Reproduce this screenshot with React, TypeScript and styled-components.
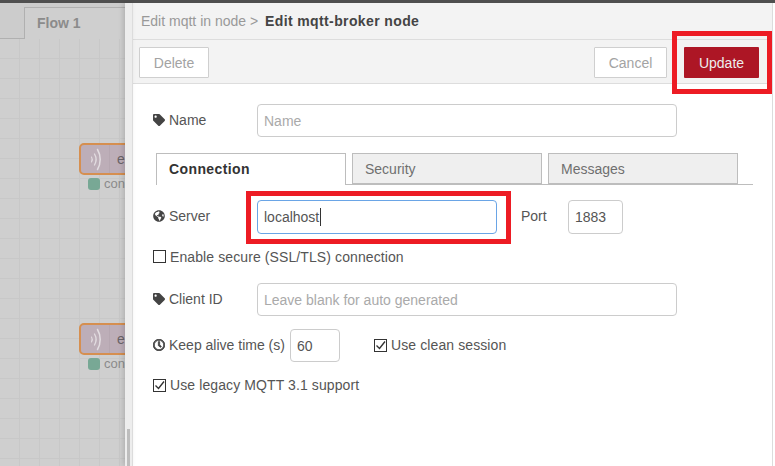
import React from "react";
import styled, { createGlobalStyle } from "styled-components";
import { FaTag, FaGlobeAmericas, FaRegClock } from "react-icons/fa";

const GlobalStyle = createGlobalStyle`
  html, body {
    margin: 0;
    padding: 0;
    height: 100%;
    overflow: hidden;
    background: #fff;
  }
  * {
    box-sizing: border-box;
  }
`;

const Page = styled.div`
  width: 775px;
  height: 466px;
  display: flex;
  flex-direction: column;
  font-family: "Liberation Sans", Arial, sans-serif;
  font-size: 14px;
  color: #555;
  overflow: hidden;
`;

const TopBar = styled.div`
  height: 3px;
  background: #4f4f4f;
  flex: none;
`;

const Main = styled.div`
  flex: 1;
  display: flex;
  min-height: 0;
`;

const Workspace = styled.div`
  position: relative;
  width: 125px;
  flex: none;
  display: flex;
  flex-direction: column;
  overflow: hidden;
  background: #cfcfcf;
`;

const FlowTabs = styled.div`
  height: 36px;
  flex: none;
  padding: 4px 0 0 24px;
  background: #cccccc;
  border-bottom: 1px solid #b0b0b0;
  display: flex;
`;

const FlowTab = styled.div`
  flex: 1;
  height: 32px;
  padding: 7px 0 0 12px;
  background: #cfcfcf;
  border-top: 1px solid #b0b0b0;
  border-left: 1px solid #b0b0b0;
  font-weight: bold;
  color: #8b8b8b;
`;

const Grid = styled.div`
  flex: 1;
  background-color: #cfcfcf;
  background-image:
    linear-gradient(to right, #c8c8c8 1px, transparent 1px),
    linear-gradient(to bottom, #c8c8c8 1px, transparent 1px);
  background-size: 20px 20px;
  background-position: 19px 19px;
`;

const Node = styled.div<{ $top: number }>`
  position: absolute;
  left: 79px;
  top: ${(p) => p.$top}px;
  width: 70px;
  height: 32px;
  display: flex;
  background: #bdaeb8;
  border: 2px solid #d68f50;
  border-radius: 5px;
`;

const NodeIcon = styled.div`
  width: 29px;
  flex: none;
  display: flex;
  align-items: center;
  justify-content: center;
  border-right: 1px solid #b6a7b1;
`;

const NodeLabel = styled.span`
  padding-left: 7px;
  line-height: 28px;
  color: #6a6367;
`;

const NodeStatus = styled.div<{ $top: number }>`
  position: absolute;
  left: 88px;
  top: ${(p) => p.$top}px;
  display: flex;
  align-items: center;
  gap: 4px;
  font-size: 13px;
  color: #8b8b8b;
`;

const StatusDot = styled.span`
  width: 12px;
  height: 12px;
  border-radius: 3px;
  background: #78a895;
`;

const Sash = styled.div`
  position: relative;
  width: 8px;
  flex: none;
  background: #ededed;
  border-right: 1px solid #dcdcdc;
  box-shadow: -2px 0 5px rgba(0, 0, 0, 0.14);
`;

const SashGrip = styled.div`
  position: absolute;
  left: 2px;
  bottom: 0;
  width: 3px;
  height: 37px;
  background: #bdbdbd;
`;

const Panel = styled.div`
  width: 640px;
  flex: none;
  display: flex;
  flex-direction: column;
  background: #fff;
  border-right: 1px solid #dcdcdc;
`;

const Breadcrumb = styled.div`
  height: 37px;
  flex: none;
  padding: 10px 0 0 8px;
  background: #f3f3f3;
  border-bottom: 1px solid #dddddd;
  color: #999;
`;

const Current = styled.b`
  margin-left: 3px;
  letter-spacing: 0.38px;
  color: #444;
`;

const Tray = styled.div`
  height: 44px;
  flex: none;
  display: flex;
  align-items: flex-start;
  padding: 7px 13px 0 6px;
  gap: 17px;
  background: #f3f3f3;
  border-bottom: 1px solid #dddddd;
`;

const Spacer = styled.div`
  flex: 1;
`;

const TrayButton = styled.button<{ $width: number; $primary?: boolean }>`
  width: ${(p) => p.$width}px;
  height: 31px;
  padding: 0;
  font: inherit;
  border-radius: 1px;
  border: ${(p) => (p.$primary ? "none" : "1px solid #cfcfcf")};
  background: ${(p) => (p.$primary ? "#ad1625" : "#fff")};
  color: ${(p) => (p.$primary ? "#eeeeee" : "#a3a3a3")};
`;

const Form = styled.div`
  flex: 1;
  display: flex;
  flex-direction: column;
  padding: 20px 0 0 20px;
`;

const Row = styled.div<{ $height: number; $top?: number }>`
  display: flex;
  align-items: center;
  height: ${(p) => p.$height}px;
  margin-top: ${(p) => p.$top ?? 0}px;
  flex: none;
`;

const Label = styled.label<{ $width?: number; $gap?: number }>`
  display: flex;
  align-items: center;
  gap: 4px;
  width: ${(p) => (p.$width ? `${p.$width}px` : "auto")};
  margin-left: ${(p) => p.$gap ?? 0}px;
  padding-bottom: 2px;
  flex: none;
  color: #555;
  svg {
    color: #444;
    font-size: 12px;
  }
`;

const BoldClock = styled(FaRegClock)`
  stroke: currentColor;
  stroke-width: 35px;
`;

const Field = styled.div<{ $width: number }>`
  position: relative;
  width: ${(p) => p.$width}px;
  height: 100%;
  flex: none;
`;

const Input = styled.input<{ $focus?: boolean }>`
  width: 100%;
  height: 100%;
  padding: 0 6px;
  font: inherit;
  color: #555;
  outline: none;
  background: #fff;
  border-radius: 4px;
  border: 1px solid ${(p) => (p.$focus ? "#6aa5e6" : "#cccccc")};
  &::placeholder {
    color: #aaaaaa;
    opacity: 1;
  }
`;

const Caret = styled.span`
  position: absolute;
  left: 63px;
  top: 8px;
  width: 1px;
  height: 18px;
  background: #333;
`;

const Tabs = styled.div`
  display: flex;
  gap: 6px;
  width: 597px;
  height: 32px;
  margin: 16px 0 15px 3px;
  padding-right: 15px;
  border-bottom: 1px solid #bdbdbd;
  flex: none;
`;

const Tab = styled.div<{ $active?: boolean }>`
  width: 190px;
  height: ${(p) => (p.$active ? 32 : 31)}px;
  padding: 7px 0 0 12px;
  background: ${(p) => (p.$active ? "#fff" : "#efefef")};
  border: 1px solid #bdbdbd;
  border-bottom: ${(p) => (p.$active ? "none" : "1px solid #bdbdbd")};
  color: ${(p) => (p.$active ? "#333" : "#6f6f6f")};
  font-weight: ${(p) => (p.$active ? "bold" : "normal")};
  letter-spacing: ${(p) => (p.$active ? "0.4px" : "0")};
`;

const CheckRow = styled.label<{ $offset?: number; $lift?: number }>`
  display: flex;
  align-items: center;
  gap: 4px;
  margin-left: ${(p) => p.$offset ?? 0}px;
  margin-bottom: ${(p) => p.$lift ?? 0}px;
  flex: none;
  letter-spacing: 0.1px;
  color: #555;
`;

const Box = styled.span`
  width: 13px;
  height: 13px;
  border: 1px solid #333;
  background: #fff;
  flex: none;
  display: flex;
  align-items: center;
  justify-content: center;
`;

const Highlight = styled.div<{ $x: number; $y: number; $w: number; $h: number }>`
  position: absolute;
  left: ${(p) => p.$x}px;
  top: ${(p) => p.$y}px;
  width: ${(p) => p.$w}px;
  height: ${(p) => p.$h}px;
  border: 5px solid #ed1c24;
  pointer-events: none;
`;

const Waves = () => (
  <svg width="11" height="23" viewBox="0 0 11 23" fill="none" stroke="#e3dde1" strokeLinecap="round">
    <path d="M1.5 9c1 1.6 1 3.4 0 5" strokeWidth="1.1" />
    <path d="M4.5 6c2 3.4 2 7.6 0 11" strokeWidth="1.3" />
    <path d="M7.5 1.5c3.6 6 3.6 14 0 20" strokeWidth="1.5" />
  </svg>
);

const Tick = ({ checked }: { checked?: boolean }) => (
  <Box>
    {checked && (
      <svg width="11" height="11" viewBox="0 0 11 11" fill="none" stroke="#333" strokeWidth="1.4">
        <path d="M1.5 5.5l3 3 5.5-7" />
      </svg>
    )}
  </Box>
);

const App = () => {
  return (
    <Page>
      <GlobalStyle />
      <TopBar />
      <Main>
        <Workspace>
          <FlowTabs>
            <FlowTab>Flow 1</FlowTab>
          </FlowTabs>
          <Grid />
          <Node $top={140}>
            <NodeIcon>
              <Waves />
            </NodeIcon>
            <NodeLabel>e</NodeLabel>
          </Node>
          <NodeStatus $top={173}>
            <StatusDot />
            con
          </NodeStatus>
          <Node $top={320}>
            <NodeIcon>
              <Waves />
            </NodeIcon>
            <NodeLabel>e</NodeLabel>
          </Node>
          <NodeStatus $top={353}>
            <StatusDot />
            con
          </NodeStatus>
        </Workspace>
        <Sash>
          <SashGrip />
        </Sash>
        <Panel>
          <Breadcrumb>
            Edit mqtt in node &gt; <Current>Edit mqtt-broker node</Current>
          </Breadcrumb>
          <Tray>
            <TrayButton $width={70}>Delete</TrayButton>
            <Spacer />
            <TrayButton $width={73}>Cancel</TrayButton>
            <TrayButton $width={75} $primary>
              Update
            </TrayButton>
          </Tray>
          <Form>
            <Row $height={33}>
              <Label $width={104}>
                <FaTag />
                Name
              </Label>
              <Field $width={420}>
                <Input placeholder="Name" />
              </Field>
            </Row>
            <Tabs>
              <Tab $active>Connection</Tab>
              <Tab>Security</Tab>
              <Tab>Messages</Tab>
            </Tabs>
            <Row $height={34}>
              <Label $width={104}>
                <FaGlobeAmericas />
                Server
              </Label>
              <Field $width={240}>
                <Input $focus defaultValue="localhost" />
                <Caret />
              </Field>
              <Label $width={47} $gap={24}>
                Port
              </Label>
              <Field $width={55}>
                <Input defaultValue="1883" />
              </Field>
            </Row>
            <Row $height={49}>
              <CheckRow $lift={4}>
                <Tick />
                Enable secure (SSL/TLS) connection
              </CheckRow>
            </Row>
            <Row $height={33}>
              <Label $width={104}>
                <FaTag />
                Client ID
              </Label>
              <Field $width={420}>
                <Input placeholder="Leave blank for auto generated" />
              </Field>
            </Row>
            <Row $height={33} $top={13}>
              <Label $width={137}>
                <BoldClock />
                Keep alive time (s)
              </Label>
              <Field $width={50}>
                <Input defaultValue="60" />
              </Field>
              <CheckRow $offset={34} $lift={1}>
                <Tick checked />
                Use clean session
              </CheckRow>
            </Row>
            <Row $height={46}>
              <CheckRow>
                <Tick checked />
                Use legacy MQTT 3.1 support
              </CheckRow>
            </Row>
          </Form>
        </Panel>
      </Main>
      <Highlight $x={672} $y={31} $w={100} $h={63} />
      <Highlight $x={246} $y={191} $w={265} $h={53} />
    </Page>
  );
};

export default App;
